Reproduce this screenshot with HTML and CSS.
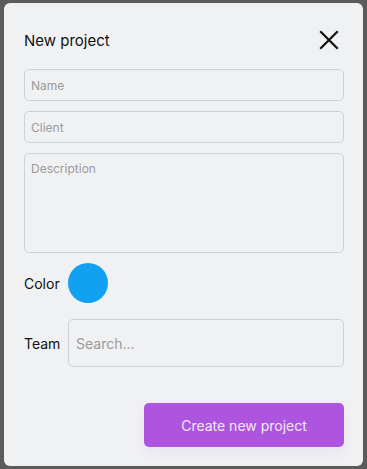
FILE: index.html
```html
<!DOCTYPE html>
<html lang="en">
<head>
    <meta charset="UTF-8">
    <title>New project</title>
    <link rel="stylesheet" href="styles.css">
</head>
<body>
    <div class="modal">
        <div class="modal-header">
            <h2>New project</h2>
            <button class="close-btn" aria-label="Close">
                <svg width="20" height="20" viewBox="0 0 20 20">
                    <path d="M2 2 L18 18 M18 2 L2 18" stroke="#111" stroke-width="2.2" stroke-linecap="square"/>
                </svg>
            </button>
        </div>
        <form class="project-form">
            <input class="field" type="text" placeholder="Name">
            <input class="field" type="text" placeholder="Client">
            <textarea class="field field-area" placeholder="Description"></textarea>
            <div class="row">
                <span class="row-label">Color</span>
                <span class="color-swatch"></span>
            </div>
            <div class="row team-row">
                <span class="row-label">Team</span>
                <input class="field field-search" type="text" placeholder="Search...">
            </div>
            <div class="actions">
                <button type="button" class="create-btn">Create new project</button>
            </div>
        </form>
    </div>
</body>
</html>
```

FILE: styles.css
```css
* {
    box-sizing: border-box;
}

body {
    margin: 0;
    background: #5b5b5b;
    font-family: Inter, "Noto Sans", sans-serif;
    color: #111;
}

.modal {
    margin: 3px 4px;
    width: 359px;
    height: 463px;
    background: #f0f1f3;
    border-radius: 6px;
    padding: 25px 19px 0 20px;
}

.modal-header {
    display: flex;
    align-items: center;
    justify-content: space-between;
    height: 24px;
    margin-bottom: 17px;
}

.modal-header h2 {
    margin: 0;
    font-size: 15px;
    font-weight: 400;
}

.close-btn {
    background: none;
    border: none;
    padding: 0;
    margin-right: 5px;
    width: 20px;
    height: 20px;
    display: flex;
}

.project-form {
    display: flex;
    flex-direction: column;
    gap: 10px;
}

.field {
    display: block;
    width: 100%;
    height: 32px;
    border: 1px solid #cfd0d3;
    border-radius: 5px;
    background: #f0f1f3;
    padding: 0 6px;
    font-family: inherit;
    font-size: 12px;
    color: #111;
    outline: none;
}

.field::placeholder {
    color: #9a9a9a;
}

.field-area {
    height: 100px;
    padding-top: 7px;
    resize: none;
}

.row {
    display: flex;
    align-items: center;
}

.row-label {
    width: 44px;
    font-size: 14px;
}

.color-swatch {
    width: 40px;
    height: 40px;
    border-radius: 50%;
    background: #12a0f0;
}

.team-row {
    margin-top: 6px;
}

.field-search {
    flex: 1;
    height: 48px;
    padding: 0 7px;
    font-size: 14px;
}

.actions {
    display: flex;
    justify-content: flex-end;
    margin-top: 26px;
}

.create-btn {
    width: 200px;
    height: 44px;
    border: none;
    border-radius: 5px;
    background: #ae55e0;
    color: #f3e8fb;
    font-family: inherit;
    font-size: 14px;
    box-shadow: 0 6px 12px rgba(174, 85, 224, 0.08);
}
```
